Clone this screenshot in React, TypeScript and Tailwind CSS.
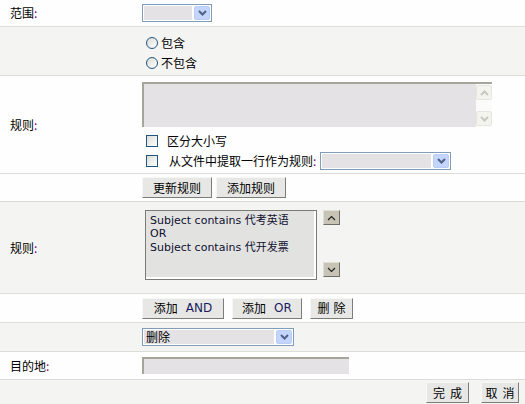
import React from "react";

const font = "font-['SimSun','Noto_Sans_CJK_SC',sans-serif]";

function Chevron({ up = false, color = "#4d6185", thin = false }: { up?: boolean; color?: string; thin?: boolean }) {
  return (
    <svg width="9" height="6" viewBox="0 0 9 6">
      <path
        d={up ? "M1 5 L4.5 1.5 L8 5" : "M1 1 L4.5 4.5 L8 1"}
        fill="none"
        stroke={color}
        strokeWidth={thin ? 1.2 : 2}
      />
    </svg>
  );
}

function Select({ width, text }: { width: number; text?: string }) {
  return (
    <div
      className="flex h-[18px] items-center border border-[#7f9db9] bg-white p-[1px]"
      style={{ width }}
    >
      <div className="flex h-full flex-1 items-center bg-[#e4e2e4] pl-[2px] text-[12px] leading-none text-black">
        {text}
      </div>
      <div className="ml-[2px] flex h-full w-[16px] items-center justify-center rounded-[2px] border border-[#b9cdf8] bg-[#c4d5fb]">
        <Chevron />
      </div>
    </div>
  );
}

function Btn({ children, className = "" }: { children: React.ReactNode; className?: string }) {
  return (
    <button
      className={
        "flex h-[21px] items-center justify-center border border-t-[#f6f6f4] border-l-[#f6f6f4] border-r-[#7c7c78] border-b-[#7c7c78] bg-[#e7e8e5] text-[12px] leading-none text-black " +
        className
      }
    >
      {children}
    </button>
  );
}

function Radio({ label }: { label: string }) {
  return (
    <div className="flex h-[20px] items-center">
      <span className="ml-[4px] mr-[3px] h-[12px] w-[12px] rounded-full border border-[#1f5480] bg-gradient-to-br from-[#dcdcd6] to-white" />
      <span className="text-[12px]">{label}</span>
    </div>
  );
}

function Check() {
  return (
    <span className="ml-[4px] h-[12px] w-[12px] border border-[#1f5480] bg-gradient-to-br from-[#dcdcd6] to-white" />
  );
}

function Colon() {
  return <span className="text-[#800080]">:</span>;
}

const latin = "font-['DejaVu_Sans',sans-serif] text-[12px] text-[#1a1a60]";

export default function App() {
  return (
    <div className={`w-[525px] h-[404px] overflow-hidden bg-[#fdfefd] text-[12px] text-black ${font}`}>
      {/* 范围 */}
      <div className="flex h-[27px] items-center border-b border-[#dcdcda] bg-[#fdfefd]">
        <div className="w-[142px] pl-[10px]">范围<Colon /></div>
        <Select width={70} />
      </div>

      {/* 包含 */}
      <div className="flex h-[49px] flex-col justify-center border-b border-[#dcdcda] bg-[#f4f5f2] pl-[142px] pt-[4px]">
        <Radio label="包含" />
        <Radio label="不包含" />
      </div>

      {/* 规则 input */}
      <div className="flex h-[98px] border-b border-[#dcdcda] bg-[#fdfefd]">
        <div className="flex w-[142px] items-center pl-[10px]">规则<Colon /></div>
        <div className="flex flex-col pt-[6px]">
          <div className="flex h-[45px] w-[350px] border-l-2 border-t-2 border-[#a6a59c] bg-[#e4e2e4]">
            <div className="flex-1" />
            <div className="flex w-[16px] flex-col justify-between bg-[#fbfbf9] py-[1px]">
              <div className="flex h-[15px] items-center justify-center rounded-[2px] border border-[#e6e6e0] bg-[#f4f4ef]">
                <Chevron up color="#c8c8c0" />
              </div>
              <div className="flex h-[15px] items-center justify-center rounded-[2px] border border-[#e6e6e0] bg-[#f4f4ef]">
                <Chevron color="#c8c8c0" />
              </div>
            </div>
          </div>
          <div className="mt-[6px] flex h-[16px] items-center">
            <Check />
            <span className="ml-[9px]">区分大小写</span>
          </div>
          <div className="mt-[2px] flex h-[20px] items-center">
            <Check />
            <span className="ml-[11px] mr-[4px]">从文件中提取一行作为规则<Colon /></span>
            <Select width={131} />
          </div>
        </div>
      </div>

      {/* 更新规则 */}
      <div className="flex h-[28px] items-center gap-[4px] border-b border-[#dcdcda] bg-[#fdfefd] pl-[142px]">
        <Btn className="w-[70px]">更新规则</Btn>
        <Btn className="w-[70px]">添加规则</Btn>
      </div>

      {/* 规则 list */}
      <div className="flex h-[92px] border-b border-[#dcdcda] bg-[#f4f5f2]">
        <div className="flex w-[145px] items-center pl-[10px]">规则<Colon /></div>
        <div className="pt-[8px]">
          <div className="h-[70px] w-[172px] border border-[#7a7a76] bg-white pb-[2px] pr-[2px]">
            <div className="h-full w-full bg-[#e2e3e1] px-[4px] pt-[2px] font-['DejaVu_Sans','Noto_Sans_CJK_SC',sans-serif] text-[11px] leading-[13px] text-[#101030]">
              <div>Subject contains <span className={font}>代考英语</span></div>
              <div>OR</div>
              <div>Subject contains <span className={font}>代开发票</span></div>
            </div>
          </div>
        </div>
        <div className="ml-[6px] flex h-[75px] flex-col justify-between pt-[8px]">
          <div className="flex h-[15px] w-[17px] items-center justify-center border border-t-[#e0e0d8] border-l-[#e0e0d8] border-r-[#6e6d66] border-b-[#6e6d66] bg-[#c7c3b5]">
            <Chevron up thin color="#202020" />
          </div>
          <div className="flex h-[15px] w-[17px] items-center justify-center border border-t-[#e0e0d8] border-l-[#e0e0d8] border-r-[#6e6d66] border-b-[#6e6d66] bg-[#c7c3b5]">
            <Chevron thin color="#202020" />
          </div>
        </div>
      </div>

      {/* 添加 AND */}
      <div className="flex h-[29px] items-center border-b border-[#dcdcda] bg-[#fdfefd] pl-[142px]">
        <Btn className="w-[82px] gap-[8px]"><span>添加</span><span className={latin}>AND</span></Btn>
        <Btn className="ml-[8px] w-[70px] gap-[8px]"><span>添加</span><span className={latin}>OR</span></Btn>
        <Btn className="ml-[8px] w-[43px] gap-[4px]"><span>删</span><span>除</span></Btn>
      </div>

      {/* 删除 select */}
      <div className="flex h-[29px] items-center border-b border-[#dcdcda] bg-[#f4f5f2] pl-[142px]">
        <Select width={152} text="删除" />
      </div>

      {/* 目的地 */}
      <div className="flex h-[28px] items-center border-b border-[#dcdcda] bg-[#fdfefd]">
        <div className="w-[142px] pl-[10px]">目的地<Colon /></div>
        <div className="h-[17px] w-[207px] border-l-2 border-t-2 border-[#a6a59c] bg-[#e4e2e4]" />
      </div>

      {/* 完成 */}
      <div className="flex h-[25px] items-center justify-end gap-[12px] bg-[#f4f5f2] pr-[6px]">
        <Btn className="w-[43px] gap-[5px]"><span>完</span><span>成</span></Btn>
        <Btn className="w-[38px] gap-[5px]"><span>取</span><span>消</span></Btn>
      </div>
    </div>
  );
}
